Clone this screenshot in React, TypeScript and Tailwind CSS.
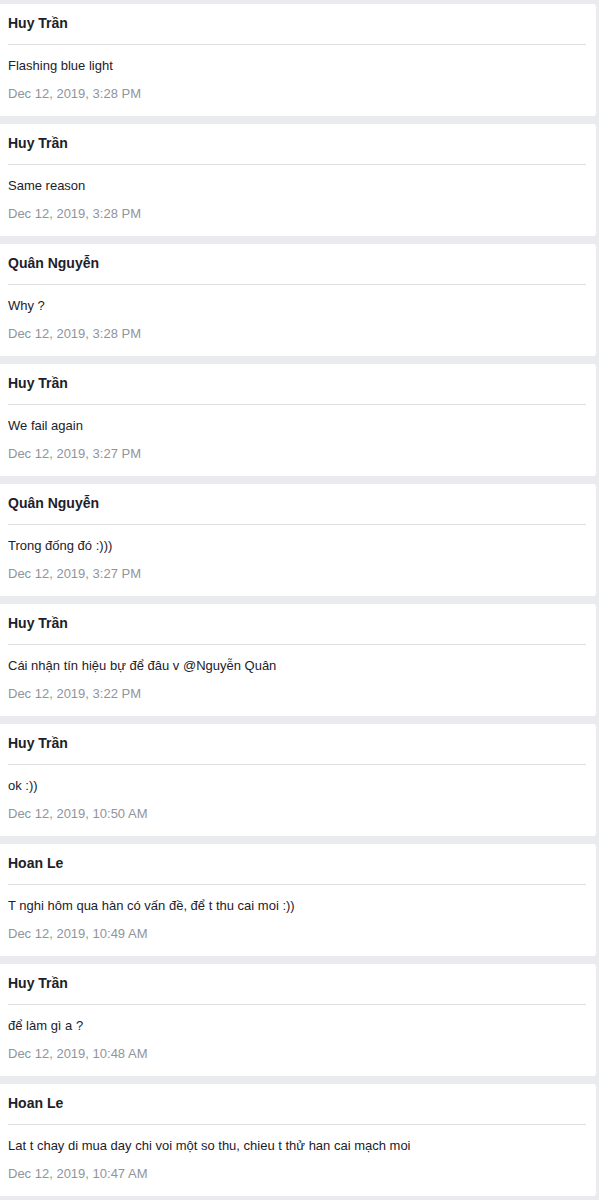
const comments = [
  { name: "Huy Trần", text: "Flashing blue light", time: "Dec 12, 2019, 3:28 PM" },
  { name: "Huy Trần", text: "Same reason", time: "Dec 12, 2019, 3:28 PM" },
  { name: "Quân Nguyễn", text: "Why ?", time: "Dec 12, 2019, 3:28 PM" },
  { name: "Huy Trần", text: "We fail again", time: "Dec 12, 2019, 3:27 PM" },
  { name: "Quân Nguyễn", text: "Trong đống đó :)))", time: "Dec 12, 2019, 3:27 PM" },
  { name: "Huy Trần", text: "Cái nhận tín hiệu bự để đâu v @Nguyễn Quân", time: "Dec 12, 2019, 3:22 PM" },
  { name: "Huy Trần", text: "ok :))", time: "Dec 12, 2019, 10:50 AM" },
  { name: "Hoan Le", text: "T nghi hôm qua hàn có vấn đề, để t thu cai moi :))", time: "Dec 12, 2019, 10:49 AM" },
  { name: "Huy Trần", text: "để làm gì a ?", time: "Dec 12, 2019, 10:48 AM" },
  { name: "Hoan Le", text: "Lat t chay di mua day chi voi một so thu, chieu t thử han cai mạch moi", time: "Dec 12, 2019, 10:47 AM" },
];

export default function App() {
  return (
    <div className="min-h-[1200px] bg-[#e9ebee] pt-[4px] pr-[3px] font-['Liberation_Sans',Arial,sans-serif]">
      <div className="flex flex-col gap-[8px]">
        {comments.map((c, i) => (
          <div key={i} className="h-[112px] rounded-r-[3px] bg-white pl-[8px] pr-[10px]">
            <div className="flex h-[41px] items-center border-b border-[#dddfe2] pb-[1px] text-[14px] font-bold text-[#1d2129]">
              {c.name}
            </div>
            <div className="pt-[13px] text-[13px] leading-[16px] text-[#1d2129]">{c.text}</div>
            <div className="pt-[12px] text-[13px] leading-[16px] text-[#90949c]">{c.time}</div>
          </div>
        ))}
      </div>
    </div>
  );
}
